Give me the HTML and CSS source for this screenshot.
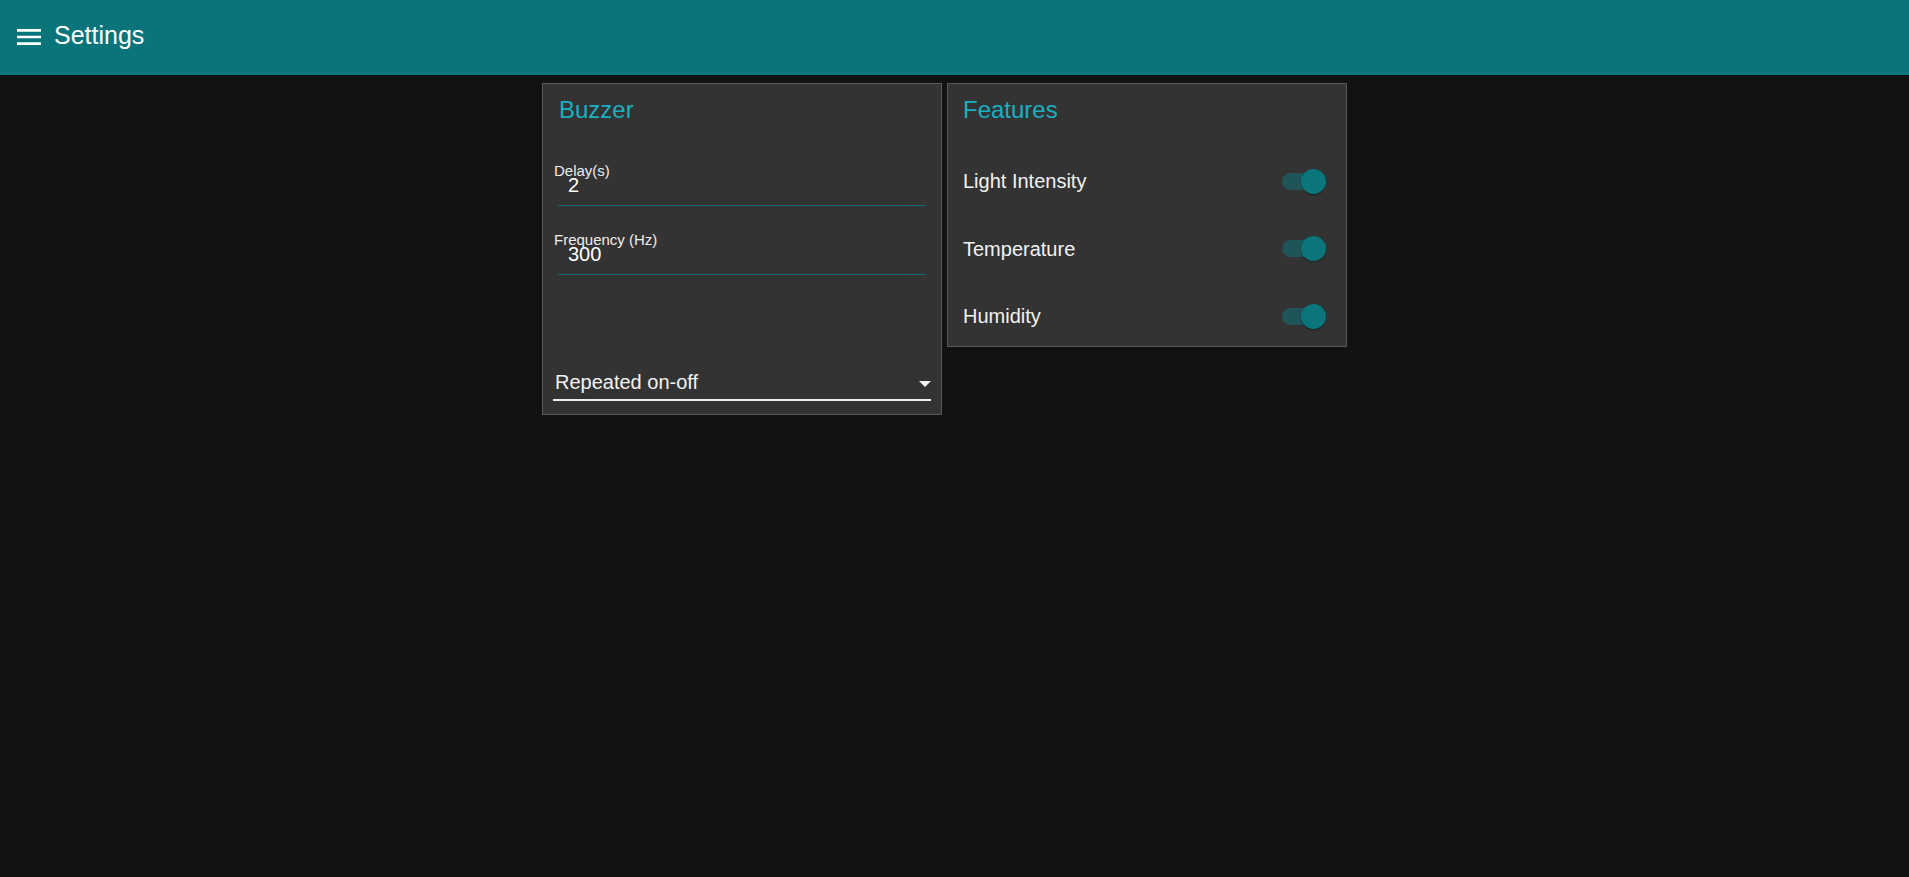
FILE: index.html
```html
<!DOCTYPE html>
<html lang="en">
<head>
<meta charset="utf-8">
<title>Settings</title>
<link rel="stylesheet" href="styles.css">
</head>
<body>
<header class="appbar">
  <svg class="menu-icon" viewBox="0 0 24 24" width="32" height="32" aria-hidden="true"><path fill="#fff" d="M3 18h18v-2H3v2zm0-5h18v-2H3v2zm0-7v2h18V6H3z"/></svg>
  <h1 class="appbar-title">Settings</h1>
</header>
<main class="content">
  <section class="card card-buzzer">
    <h2 class="card-title">Buzzer</h2>
    <div class="field">
      <div class="field-label">Delay(s)</div>
      <div class="field-value">2</div>
    </div>
    <div class="field field-second">
      <div class="field-label">Frequency (Hz)</div>
      <div class="field-value">300</div>
    </div>
    <div class="select">
      <span class="select-text">Repeated on-off</span>
      <svg class="select-arrow" viewBox="0 0 12 6" width="12" height="6" aria-hidden="true"><polygon fill="#f2f2f2" points="0,0 12,0 6,6"/></svg>
    </div>
  </section>
  <section class="card card-features">
    <h2 class="card-title">Features</h2>
    <div class="rows">
      <div class="row">
        <span class="row-label">Light Intensity</span>
        <span class="toggle"><span class="toggle-track"></span><span class="toggle-knob"></span></span>
      </div>
      <div class="row">
        <span class="row-label">Temperature</span>
        <span class="toggle"><span class="toggle-track"></span><span class="toggle-knob"></span></span>
      </div>
      <div class="row">
        <span class="row-label">Humidity</span>
        <span class="toggle"><span class="toggle-track"></span><span class="toggle-knob"></span></span>
      </div>
    </div>
  </section>
</main>
</body>
</html>
```

FILE: styles.css
```css
* { box-sizing: border-box; }

html, body {
  margin: 0;
  padding: 0;
  background: #121212;
  font-family: "Liberation Sans", Arial, sans-serif;
  color: #f2f2f2;
}

.appbar {
  height: 75px;
  background: #097479;
  display: flex;
  align-items: flex-start;
  padding: 20px 0 0 13px;
  gap: 9px;
}

.menu-icon {
  display: block;
  margin-top: 1px;
  flex: none;
}

.appbar-title {
  margin: 0;
  font-size: 25px;
  line-height: 30px;
  font-weight: 400;
  color: #ffffff;
}

.content {
  display: flex;
  justify-content: center;
  align-items: flex-start;
  gap: 5px;
  padding: 8px 20px 0 0;
}

.card {
  width: 400px;
  background: #333333;
  border: 1px solid #585858;
  padding: 12px 15px 0 15px;
}

.card-title {
  margin: 0 0 0 1px;
  font-size: 24px;
  line-height: 28px;
  font-weight: 400;
  color: #1ab0c0;
}

.card-features .card-title { margin-left: 0; }

/* Buzzer */
.card-buzzer { padding-bottom: 13px; }

.field {
  margin-top: 38px;
  padding-bottom: 9px;
  border-bottom: 1px solid #0b6c71;
}

.field-second { margin-top: 24.5px; }

.field-label {
  margin-left: -4px;
  font-size: 15px;
  line-height: 17px;
  color: #eeeeee;
}

.field-value {
  margin-top: -5px;
  padding-left: 10px;
  font-size: 20px;
  line-height: 22px;
  color: #ffffff;
}

.select {
  margin: 95.5px -5px 0 -5px;
  display: flex;
  justify-content: space-between;
  align-items: center;
  padding: 0 0 5px 2px;
  border-bottom: 2px solid #eeeeee;
}

.select-text {
  font-size: 20px;
  line-height: 24px;
  color: #f2f2f2;
}

.select-arrow {
  display: block;
  margin-top: 3px;
  flex: none;
}

/* Features */
.card-features { padding-bottom: 6px; }

.rows {
  margin-top: 33px;
  display: flex;
  flex-direction: column;
  gap: 19.5px;
}

.row {
  height: 48px;
  display: flex;
  align-items: center;
  justify-content: space-between;
  padding-right: 5px;
}

.row-label {
  font-size: 20px;
  line-height: 24px;
  color: #f2f2f2;
}

.toggle {
  position: relative;
  width: 44px;
  height: 25px;
  flex: none;
}

.toggle-track {
  position: absolute;
  left: 0;
  top: 4px;
  width: 42px;
  height: 17px;
  border-radius: 9px;
  background: #1f5558;
}

.toggle-knob {
  position: absolute;
  right: 0;
  top: 0;
  width: 25px;
  height: 25px;
  border-radius: 50%;
  background: #0a767b;
  box-shadow: 0 2px 1px -1px rgba(0,0,0,0.2), 0 1px 1px 0 rgba(0,0,0,0.14), 0 1px 3px 0 rgba(0,0,0,0.12);
}
```
